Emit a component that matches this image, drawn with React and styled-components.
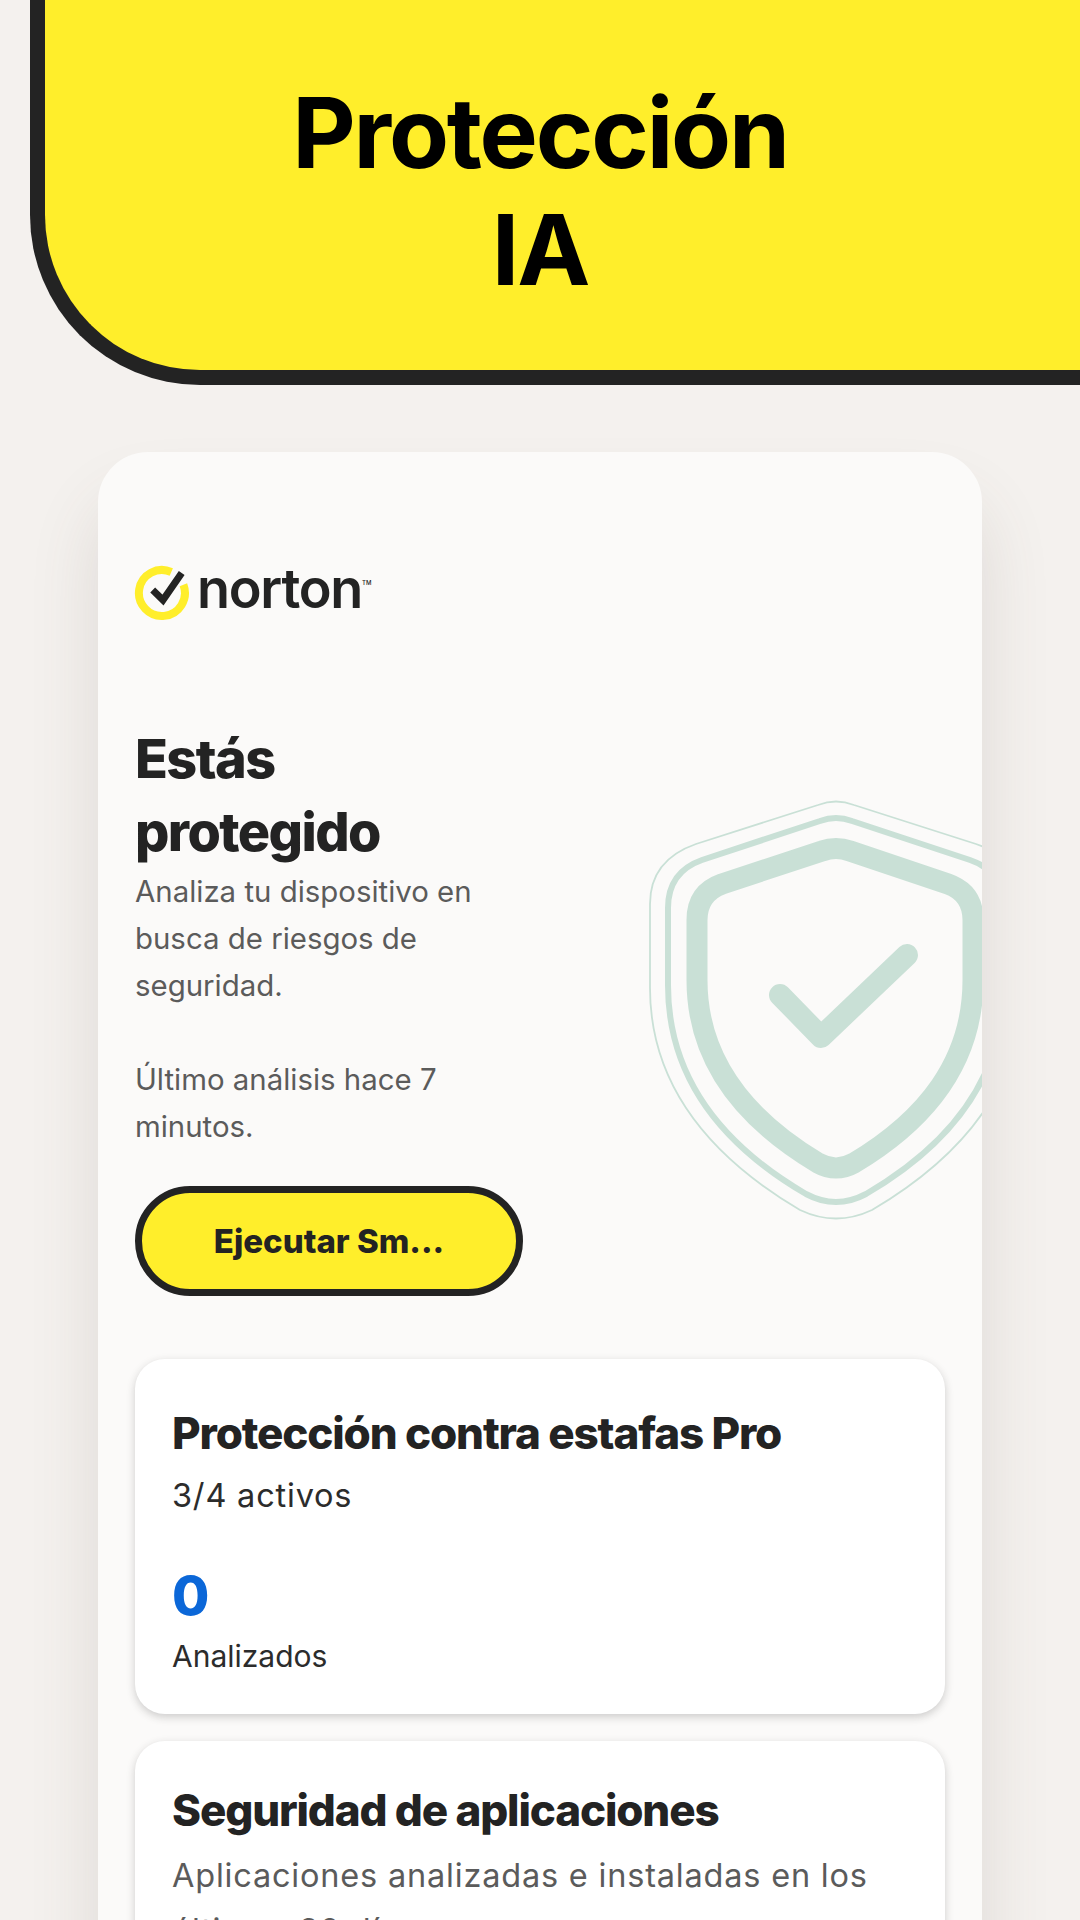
import styled, { createGlobalStyle } from "styled-components";

const GlobalStyle = createGlobalStyle`
  html, body {
    margin: 0;
    padding: 0;
    background: #f4f1ee;
  }
  * {
    box-sizing: border-box;
  }
`;

const Screen = styled.div`
  width: 1080px;
  height: 1920px;
  overflow: hidden;
  background: #f4f1ee;
  font-family: Inter, "Noto Sans", sans-serif;
`;

const Banner = styled.header`
  height: 385px;
  margin-left: 30px;
  padding-top: 74px;
  padding-right: 45px;
  background: #ffee2b;
  border: 15px solid #232323;
  border-top: none;
  border-right: none;
  border-bottom-left-radius: 170px;
  text-align: center;
`;

const BannerTitle = styled.h1`
  margin: 0;
  font-size: 98px;
  line-height: 117px;
  font-weight: 700;
  letter-spacing: -2.2px;
  color: #000;
`;

const Panel = styled.main`
  width: 884px;
  margin: 67px 0 0 98px;
  height: 1500px;
  padding-top: 113px;
  background: #fbfaf9;
  border-radius: 50px 50px 0 0;
  box-shadow: 0 50px 70px rgba(90, 80, 70, 0.14);
  overflow: hidden;
`;

const Logo = styled.div`
  display: flex;
  align-items: flex-start;
  height: 60px;
  margin-left: 35px;
  color: #232323;
`;

const LogoWord = styled.span`
  margin: -12px 0 0 4px;
  font-size: 54px;
  line-height: 72px;
  font-weight: 600;
  letter-spacing: -1.3px;
`;

const LogoMark = styled.sup`
  margin-top: 14px;
  font-size: 6px;
  line-height: 8px;
  font-weight: 500;
`;

const Hero = styled.section`
  display: flex;
  justify-content: space-between;
  align-items: flex-start;
  padding-left: 37px;
`;

const HeroText = styled.div`
  width: 370px;
  padding-top: 97px;
`;

const Heading = styled.h2`
  margin: 0;
  font-size: 54px;
  line-height: 73px;
  font-weight: 800;
  letter-spacing: -1.6px;
  color: #232323;
`;

const Body = styled.p`
  margin: 0;
  font-size: 29.4px;
  line-height: 47px;
  color: #5b5b5b;
`;

const Spacer = styled.div`
  height: 47px;
`;

const PrimaryButton = styled.button`
  display: block;
  width: 388px;
  height: 110px;
  margin-top: 36px;
  padding: 0;
  background: #ffee2b;
  border: 7px solid #232323;
  border-radius: 55px;
  font-family: inherit;
  font-size: 33px;
  font-weight: 800;
  color: #232323;
`;

const Shield = styled.svg`
  flex: none;
  display: block;
  margin-top: 155px;
`;

const CardList = styled.div`
  display: flex;
  flex-direction: column;
  gap: 27px;
  margin-top: 63px;
  padding: 0 37px;
`;

const Card = styled.article`
  padding: ${(p) => (p.$tight ? "33px" : "38px")} 37px 38px;
  background: #fff;
  border-radius: 30px;
  box-shadow: 0 3px 8px rgba(40, 40, 40, 0.22);
`;

const CardTitle = styled.h3`
  margin: 0;
  padding-top: 2px;
  font-size: 44px;
  line-height: 68px;
  font-weight: 800;
  letter-spacing: -1.15px;
  color: #232323;
`;

const CardLine = styled.p`
  margin: ${(p) => (p.$muted ? "4px" : "5px")} 0 0;
  font-size: 32.5px;
  line-height: ${(p) => (p.$muted ? "55px" : "47px")};
  letter-spacing: 0.8px;
  color: ${(p) => (p.$muted ? "#5b5b5b" : "#2c2c2c")};
`;

const Stat = styled.div`
  margin-top: 45px;
  font-size: 54px;
  line-height: 64px;
  font-weight: 800;
  color: #0b67d8;
`;

const StatLabel = styled.div`
  margin-top: 8px;
  font-size: 30px;
  line-height: 40px;
  color: #2c2c2c;
`;

const App = () => {
  return (
    <Screen>
      <GlobalStyle />
      <Banner>
        <BannerTitle>
          Protección
          <br />
          IA
        </BannerTitle>
      </Banner>
      <Panel>
        <Logo>
          <svg width="60" height="60" viewBox="0 0 60 60">
            <path
              d="M38.3 7 A23 23 0 1 0 50.4 19.8"
              fill="none"
              stroke="#ffee2b"
              strokeWidth="8"
            />
            <path
              d="M19.7 25 L30 35 L48.7 8"
              fill="none"
              stroke="#232323"
              strokeWidth="7"
            />
          </svg>
          <LogoWord>norton</LogoWord>
          <LogoMark>TM</LogoMark>
        </Logo>
        <Hero>
          <HeroText>
            <Heading>
              Estás
              <br />
              protegido
            </Heading>
            <Body>Analiza tu dispositivo en busca de riesgos de seguridad.</Body>
            <Spacer />
            <Body>Último análisis hace 7 minutos.</Body>
            <PrimaryButton>Ejecutar Sm...</PrimaryButton>
          </HeroText>
          <Shield width="352" height="460" viewBox="0 0 352 460">
            <g fill="none" stroke="#c9e0d6" strokeLinecap="round" strokeLinejoin="round">
              <path
                strokeWidth="21"
                d="M192 71 Q206 66 220 71 L318 104 Q343 113 343 140 V200 C343 282 296 340 224 383 Q206 393 188 383 C116 340 67 282 67 200 V140 Q67 113 92 104 Z"
              />
              <path
                strokeWidth="6"
                d="M190 41 Q206 35 222 41 L340 80 Q374 92 374 128 V205 C374 298 320 365 236 414 Q206 430 176 414 C92 365 38 298 38 205 V128 Q38 92 72 80 Z"
              />
              <path
                strokeWidth="1.8"
                d="M188 25 Q206 18 224 25 L346 64 Q392 80 392 124 V208 C392 308 330 378 242 430 Q206 447 170 430 C82 378 20 308 20 208 V124 Q20 80 66 64 Z"
              />
              <path strokeWidth="22" d="M150 215 L191 257 L277 175" />
            </g>
          </Shield>
        </Hero>
        <CardList>
          <Card>
            <CardTitle>Protección contra estafas Pro</CardTitle>
            <CardLine>3/4 activos</CardLine>
            <Stat>0</Stat>
            <StatLabel>Analizados</StatLabel>
          </Card>
          <Card $tight>
            <CardTitle>Seguridad de aplicaciones</CardTitle>
            <CardLine $muted>Aplicaciones analizadas e instaladas en los últimos 30 días</CardLine>
          </Card>
        </CardList>
      </Panel>
    </Screen>
  );
};

export default App;
